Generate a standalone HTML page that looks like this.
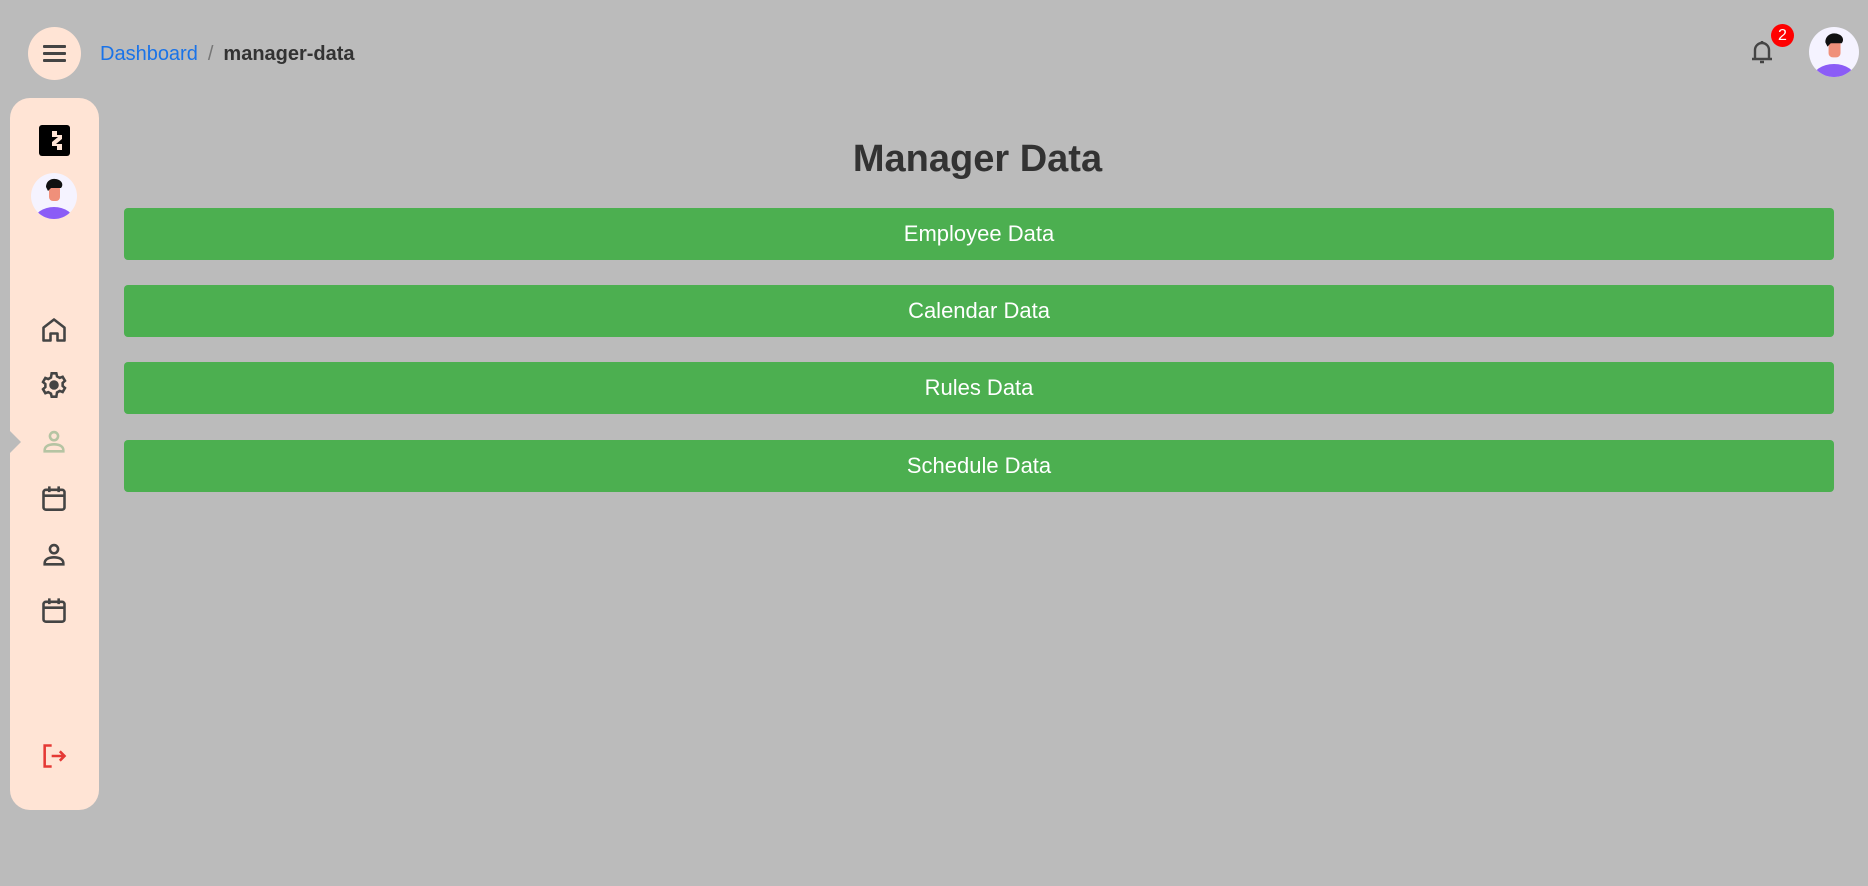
<!DOCTYPE html>
<html><head><meta charset="utf-8"><style>
*{margin:0;padding:0;box-sizing:border-box}
body{width:1868px;height:886px;background:#bbbbbb;font-family:"Liberation Sans",Roboto,sans-serif;position:relative;overflow:hidden}
.menu{position:absolute;left:28px;top:27px;width:53px;height:53px;border-radius:50%;background:#ffe4d5}
.menu i{position:absolute;left:15px;width:23px;height:2.6px;background:#444;border-radius:1px}
.bc{position:absolute;left:100px;top:43px;font-size:20px;color:#333}
.bc a{color:#1a73e8;text-decoration:none}
.bc .s{color:#777;margin:0 10px}
.bc b{font-weight:bold;color:#333}
.side{position:absolute;left:10px;top:98px;width:89px;height:712px;background:#ffe4d5;border-radius:20px}
.ic{position:absolute;left:40px;width:28px;height:28px}
.btn{position:absolute;left:124px;width:1710px;height:52px;background:#4caf50;border-radius:4px;color:#fff;font-size:22px;text-align:center;line-height:52px}
h1{position:absolute;left:0;width:1955px;text-align:center;top:138px;font-size:38px;font-weight:bold;color:#333}
.av{position:absolute;border-radius:50%;background:#f5f3ff;overflow:hidden}
</style></head><body>
<div class="menu"><i style="top:18px"></i><i style="top:25px"></i><i style="top:32px"></i></div>
<div class="bc"><a>Dashboard</a><span class="s">/</span><b>manager-data</b></div>

<div class="side">
  <div style="position:absolute;left:29px;top:27px;width:31px;height:31px;background:#000;border-radius:3px">
    <svg width="31" height="31" viewBox="0 0 31 31"><path d="M13 6h5v4h5v4l-6 5h6v6h-5v-4h-5v-4l6-5H13z" fill="#ffe4d5"/></svg>
  </div>
</div>
<svg style="position:absolute;left:10px;top:431px" width="12" height="22"><path d="M0 0L11 11L0 22z" fill="#bbbbbb"/></svg>

<div class="av" style="left:31px;top:173px;width:46px;height:46px">
<svg width="46" height="46" viewBox="0 0 46 46"><ellipse cx="23" cy="48" rx="20" ry="14" fill="#8b5cf6"/><rect x="18" y="12" width="11" height="16" rx="4" fill="#f0907a"/><path d="M15 14c0-7 7-10 13-7 4 2 4 6 2 8h-10l-3 3z" fill="#111"/></svg></div>

<svg class="ic" style="top:316px" viewBox="0 0 24 24" fill="none" stroke="#444" stroke-width="2.2" stroke-linejoin="round"><path d="M3 10l9-7 9 7v11h-6v-6h-6v6H3z"/></svg>
<svg class="ic" style="top:371px" viewBox="0 0 24 24" fill="none" stroke="#444" stroke-width="2.2"><circle cx="12" cy="12" r="3" fill="#444"/><path d="M10 2h4l.6 2.6 2.3 1.3 2.5-.9 2 3.4-2 1.8v2.6l2 1.8-2 3.4-2.5-.9-2.3 1.3L14 22h-4l-.6-2.6-2.3-1.3-2.5.9-2-3.4 2-1.8v-2.6l-2-1.8 2-3.4 2.5.9 2.3-1.3z"/></svg>
<svg class="ic" style="top:428px" viewBox="0 0 24 24" fill="none" stroke="#b5c4a3" stroke-width="2.2"><circle cx="12" cy="7" r="3.5"/><path d="M4 20v-1c0-3 3-5 8-5s8 2 8 5v1z"/></svg>
<svg class="ic" style="top:484px" viewBox="0 0 24 24" fill="none" stroke="#444" stroke-width="2.2"><rect x="3" y="5" width="18" height="17" rx="2"/><path d="M3 10h18M8 2v5M16 2v5"/></svg>
<svg class="ic" style="top:541px" viewBox="0 0 24 24" fill="none" stroke="#444" stroke-width="2.2"><circle cx="12" cy="7" r="3.5"/><path d="M4 20v-1c0-3 3-5 8-5s8 2 8 5v1z"/></svg>
<svg class="ic" style="top:596px" viewBox="0 0 24 24" fill="none" stroke="#444" stroke-width="2.2"><rect x="3" y="5" width="18" height="17" rx="2"/><path d="M3 10h18M8 2v5M16 2v5"/></svg>
<svg class="ic" style="top:742px" viewBox="0 0 24 24" fill="none" stroke="#e53935" stroke-width="2.2"><path d="M10 3H4v18h6M10 12h11M17 8l4 4-4 4"/></svg>

<h1>Manager Data</h1>
<div class="btn" style="top:208px">Employee Data</div>
<div class="btn" style="top:285px">Calendar Data</div>
<div class="btn" style="top:362px">Rules Data</div>
<div class="btn" style="top:440px">Schedule Data</div>

<svg style="position:absolute;left:1750px;top:38px" width="24" height="28" viewBox="0 0 24 28" fill="none" stroke="#444" stroke-width="2.4"><path d="M5 21V12a7 7 0 0 1 14 0v9M2 21h20"/><path d="M12 3v2M10 24h4"/></svg>
<div style="position:absolute;left:1771px;top:24px;width:23px;height:23px;border-radius:50%;background:#f00;color:#fff;font-size:16px;text-align:center;line-height:23px">2</div>
<div class="av" style="left:1809px;top:27px;width:50px;height:50px">
<svg width="50" height="50" viewBox="0 0 46 46"><ellipse cx="23" cy="48" rx="20" ry="14" fill="#8b5cf6"/><rect x="18" y="12" width="11" height="16" rx="4" fill="#f0907a"/><path d="M15 14c0-7 7-10 13-7 4 2 4 6 2 8h-10l-3 3z" fill="#111"/></svg></div>
</body></html>
